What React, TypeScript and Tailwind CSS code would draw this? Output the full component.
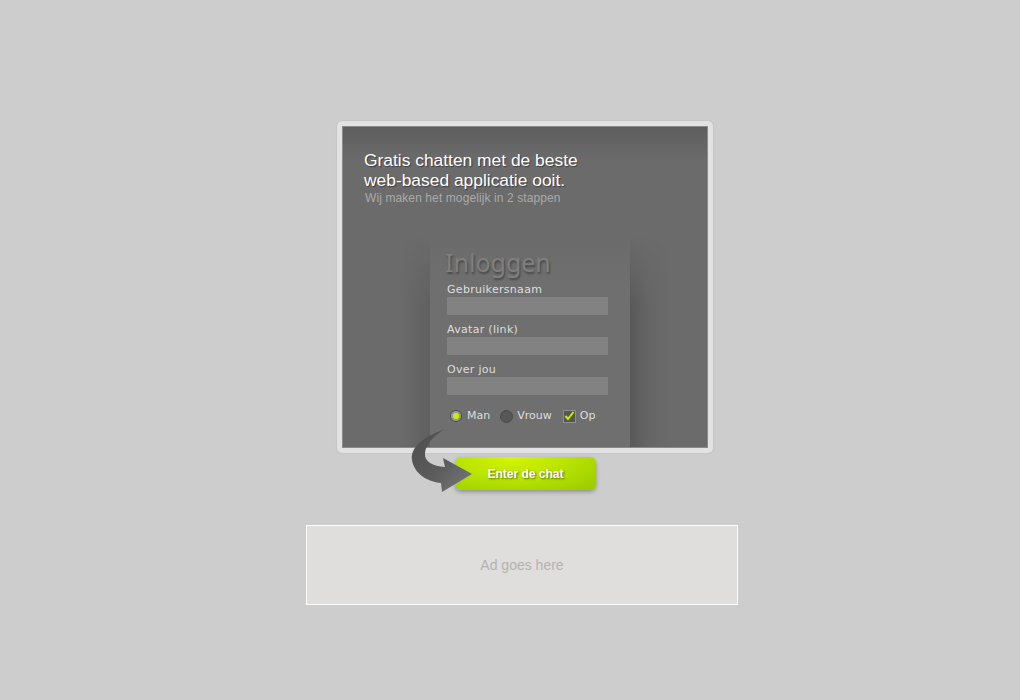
import React from "react";

const labelCls =
  "block h-[14px] text-[11px] leading-[14px] tracking-[0.3px] text-[#dedede] [font-family:'DejaVu_Sans',sans-serif]";

function Field({ label, first = false }: { label: string; first?: boolean }) {
  return (
    <div className={first ? "" : "mt-[8px]"}>
      <span className={labelCls}>{label}</span>
      <div className="h-[18px] w-[161px] bg-[#828282]" />
    </div>
  );
}

function Arrow() {
  return (
    <svg
      className="pointer-events-none absolute left-[99px] top-[304px] z-10"
      width="72"
      height="72"
      viewBox="0 0 72 72"
    >
      <defs>
        <linearGradient id="arrowFill" x1="0" y1="0" x2="1" y2="1">
          <stop offset="0" stopColor="#4c4c4c" />
          <stop offset="0.55" stopColor="#5c5c5c" />
          <stop offset="1" stopColor="#7a7a7a" />
        </linearGradient>
      </defs>
      <path
        d="M40,4 C21,11 5,21 7,35 C9,48 22,57 36,58 L37,67 L67,49 L38,33 L40,42 C28,41 19,37 20,28 C21,18 30,10 40,4 Z"
        fill="url(#arrowFill)"
      />
    </svg>
  );
}

const fadeTop = "[mask-image:linear-gradient(to_bottom,transparent,black_70px)]";

export default function App() {
  return (
    <div className="min-h-[700px] bg-[#cdcdcd] pt-[121px] [font-family:'Liberation_Sans',Arial,sans-serif]">
      <div className="flex justify-center pl-[24px]">
        <div className="relative w-[432px]">
          {/* frame */}
          <div className="ml-[31px] h-[332px] w-[376px] rounded-[5px] bg-[#e2e2e2] p-[5px] shadow-[0_0_2px_rgba(0,0,0,0.12)]">
            <div className="flex h-[322px] flex-col border border-[#8a8a8a] bg-[linear-gradient(to_bottom,#5d5d5d,#6b6b6b_32px)]">
              <div className="pl-[21px] pt-[23px]">
                <p className="text-[17.4px] leading-[20px] text-white [text-shadow:1px_1px_1px_rgba(0,0,0,0.45)]">
                  Gratis chatten met de beste
                  <br />
                  web-based applicatie ooit.
                </p>
                <p className="ml-[1px] text-[12px] leading-[16px] tracking-[0.1px] text-[#aaaaaa]">
                  Wij maken het mogelijk in 2 stappen
                </p>
              </div>

              {/* login panel with side shadows */}
              <div className="ml-[57px] mt-auto flex h-[211px]">
                <div className={`w-[30px] bg-[linear-gradient(to_left,rgba(0,0,0,0.1),rgba(0,0,0,0))] ${fadeTop}`} />
                <div className="w-[200px] bg-[linear-gradient(to_bottom,#6b6b6b,#6f6f6f_50px)] px-[17px] pt-[10px]">
                  <h2 className="-ml-[2px] h-[37px] text-[25px] leading-[32px] text-[#7f7f7f] [font-family:'Noto_Sans',sans-serif] [text-shadow:1px_2px_2px_rgba(0,0,0,0.35)]">
                    Inloggen
                  </h2>
                  <Field label="Gebruikersnaam" first />
                  <Field label="Avatar (link)" />
                  <Field label="Over jou" />

                  <div className="ml-[3px] mt-[14px] flex items-center text-[11px] leading-[14px] text-[#dedede] [font-family:'DejaVu_Sans',sans-serif]">
                    <span className="flex h-[12px] w-[12px] items-center justify-center rounded-full border border-[#4f4f4f] bg-[#9a9a9a]">
                      <span className="h-[6px] w-[6px] rounded-full bg-[#c8f000]" />
                    </span>
                    <span className="ml-[5px]">Man</span>
                    <span className="ml-[10px] h-[13px] w-[13px] rounded-full border border-[#4a4a4a] bg-[#575757]" />
                    <span className="ml-[4px]">Vrouw</span>
                    <span className="ml-[11px] flex h-[13px] w-[13px] items-center justify-center border border-[#8e8e8e] bg-[#555555]">
                      <svg width="11" height="10" viewBox="0 0 11 10">
                        <path d="M1.5,5 L4,8 L9.5,1" fill="none" stroke="#c8f000" strokeWidth="2" />
                      </svg>
                    </span>
                    <span className="ml-[4px]">Op</span>
                  </div>
                </div>
                <div className={`w-[40px] bg-[linear-gradient(to_right,rgba(0,0,0,0.16),rgba(0,0,0,0.05)_45%,rgba(0,0,0,0))] ${fadeTop}`} />
              </div>
            </div>
          </div>

          <Arrow />

          {/* button */}
          <button
            type="button"
            className="ml-[149px] mt-[4px] flex h-[33px] w-[141px] items-center justify-center rounded-[6px] bg-[radial-gradient(ellipse_at_40%_0%,#d6f500,#b4e000_55%,#98c900)] text-[12px] font-bold text-white shadow-[0_2px_4px_rgba(0,0,0,0.3)] [text-shadow:1px_1px_2px_rgba(0,0,0,0.5)]"
          >
            Enter de chat
          </button>

          {/* ad */}
          <div className="mt-[35px] flex h-[80px] w-[432px] items-center justify-center border border-white bg-[#dfdedc] text-[14px] text-[#b3b3b3]">
            Ad goes here
          </div>
        </div>
      </div>
    </div>
  );
}
